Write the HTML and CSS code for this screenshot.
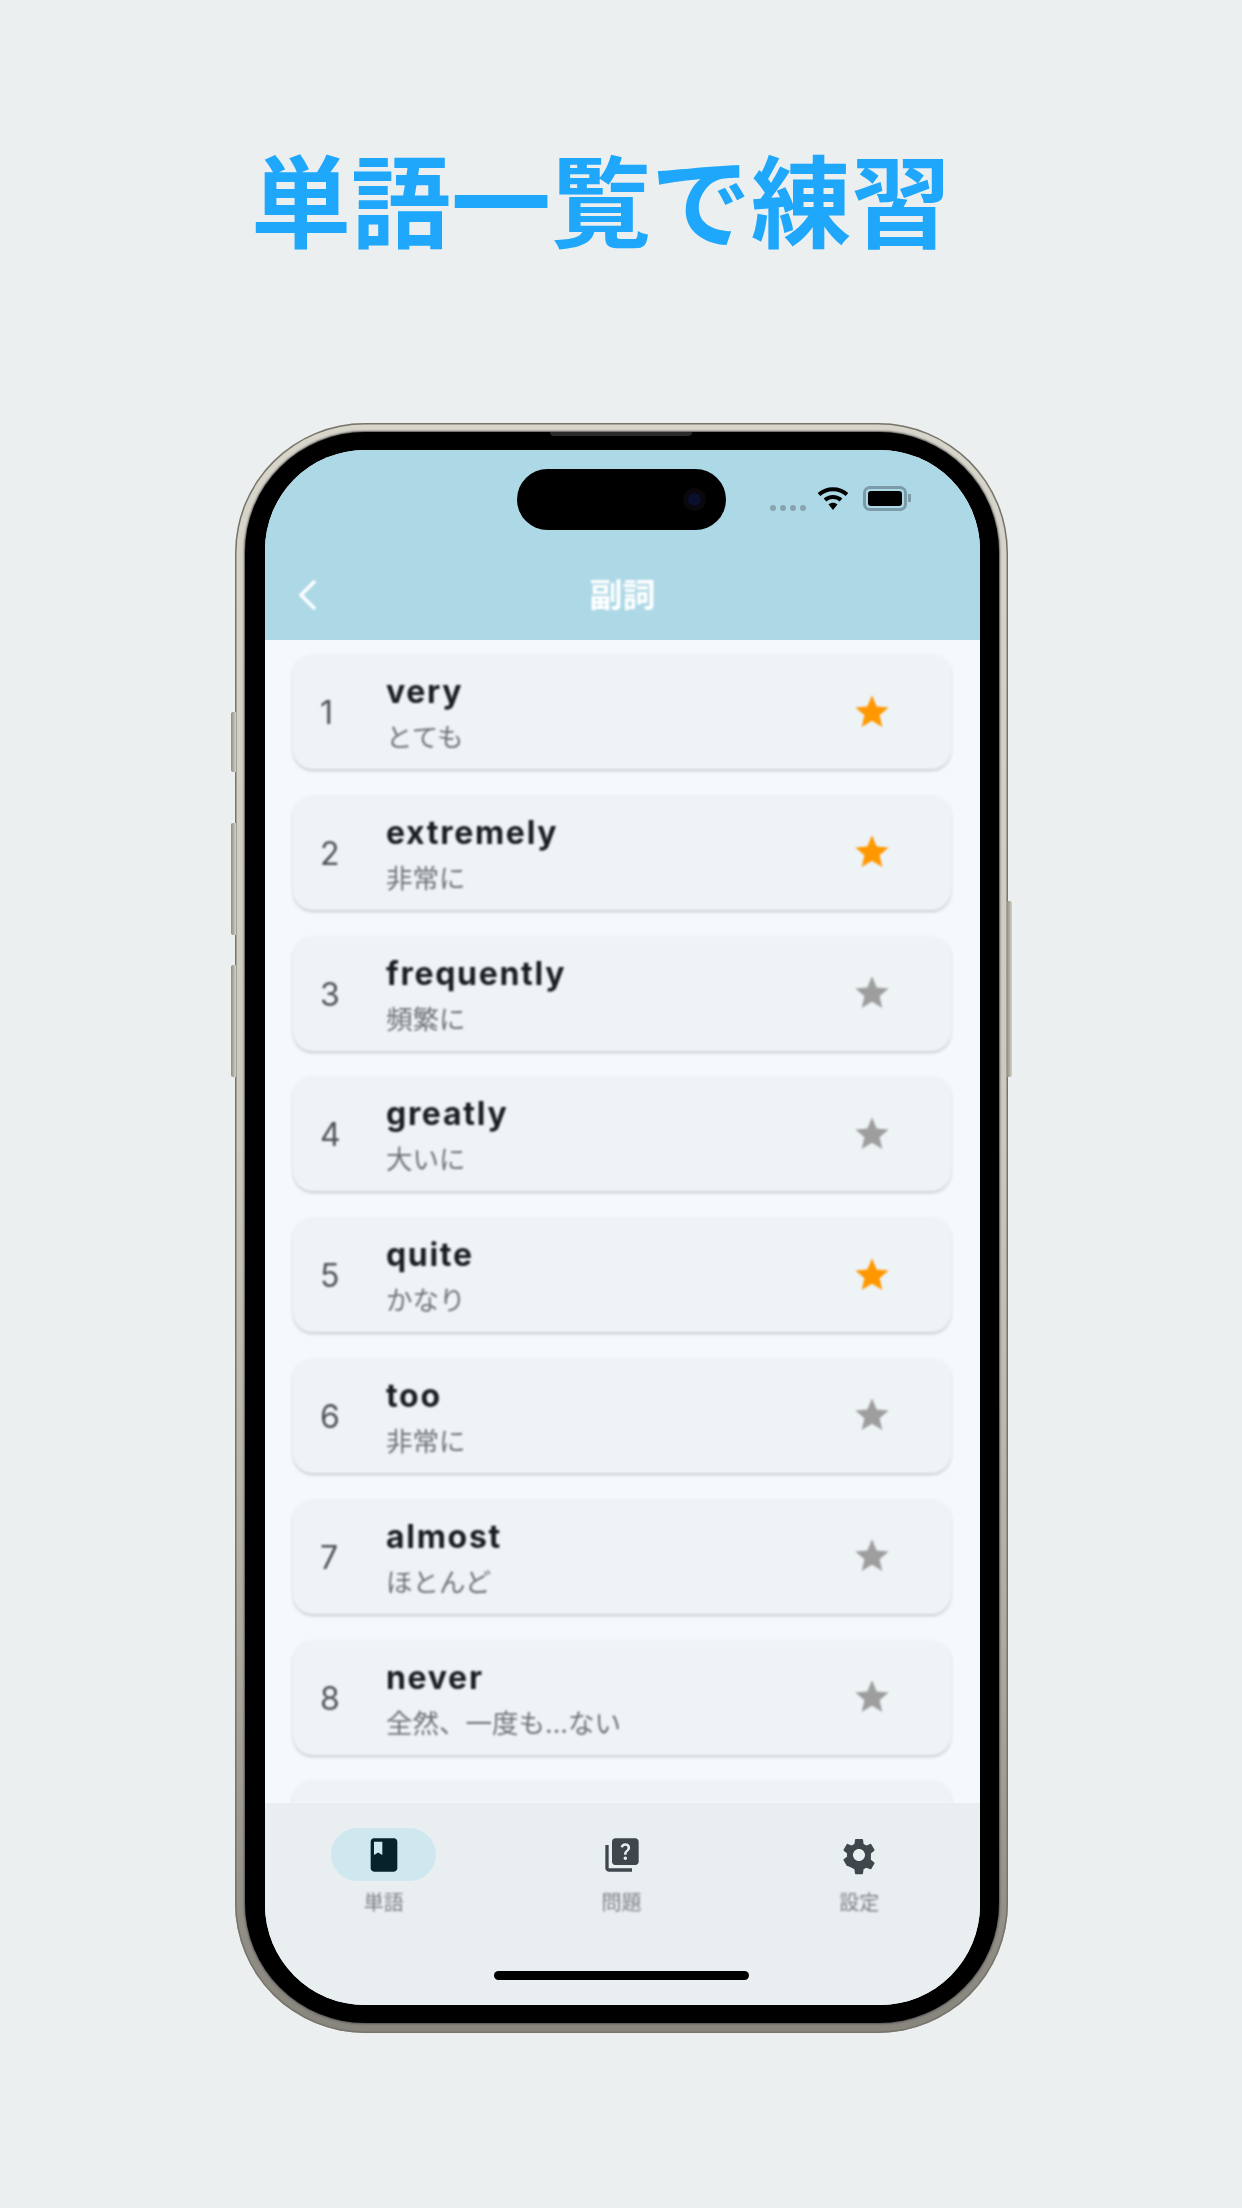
FILE: index.html
```html
<!DOCTYPE html>
<html lang="ja">
<head>
  <meta charset="UTF-8">
  <title>単語一覧で練習</title>
  <link rel="stylesheet" href="styles.css">
</head>
<body>
  <h1 class="headline">単語一覧で練習</h1>

  <div class="phone">
    <span class="side-btn btn-action"></span>
    <span class="side-btn btn-up"></span>
    <span class="side-btn btn-down"></span>
    <span class="side-btn btn-power"></span>
    <div class="bezel">
      <span class="speaker"></span>
      <div class="screen">
        <header class="app-header">
          <div class="status-row">
            <div class="island"><span class="camera"></span></div>
            <div class="status-icons">
              <div class="signal"><i></i><i></i><i></i><i></i></div>
              <svg class="wifi" viewBox="0 0 32 26">
                <path d="M2 9.5C10 2.5 22 2.5 30 9.5" />
                <path d="M8 15C12.5 11 19.500 11 24 15" />
                <path class="wifi-dot" d="M11.500 19.500L16 25L20.500 19.500C18 17.300 14 17.300 11.500 19.500Z" />
              </svg>
              <div class="battery"><span></span></div>
            </div>
          </div>
          <div class="title-row">
            <svg class="back" viewBox="0 0 20 32"><path d="M17 2L3 16L17 30" /></svg>
            <div class="page-title">副詞</div>
          </div>
        </header>

        <main class="word-list">
          <div class="card">
            <div class="num">1</div>
            <div class="word"><div class="en">very</div><div class="ja">とても</div></div>
            <svg class="star on" viewBox="0 0 24 24"><path d="M12 17.270L18.180 21l-1.640-7.030L22 9.240l-7.190-.610L12 2 9.190 8.630 2 9.240l5.460 4.730L5.820 21z" /></svg>
          </div>
          <div class="card">
            <div class="num">2</div>
            <div class="word"><div class="en">extremely</div><div class="ja">非常に</div></div>
            <svg class="star on" viewBox="0 0 24 24"><path d="M12 17.270L18.180 21l-1.640-7.030L22 9.240l-7.190-.610L12 2 9.190 8.630 2 9.240l5.460 4.730L5.820 21z" /></svg>
          </div>
          <div class="card">
            <div class="num">3</div>
            <div class="word"><div class="en">frequently</div><div class="ja">頻繁に</div></div>
            <svg class="star" viewBox="0 0 24 24"><path d="M12 17.270L18.180 21l-1.640-7.030L22 9.240l-7.190-.610L12 2 9.190 8.630 2 9.240l5.460 4.730L5.820 21z" /></svg>
          </div>
          <div class="card">
            <div class="num">4</div>
            <div class="word"><div class="en">greatly</div><div class="ja">大いに</div></div>
            <svg class="star" viewBox="0 0 24 24"><path d="M12 17.270L18.180 21l-1.640-7.030L22 9.240l-7.190-.610L12 2 9.190 8.630 2 9.240l5.460 4.730L5.820 21z" /></svg>
          </div>
          <div class="card">
            <div class="num">5</div>
            <div class="word"><div class="en">quite</div><div class="ja">かなり</div></div>
            <svg class="star on" viewBox="0 0 24 24"><path d="M12 17.270L18.180 21l-1.640-7.030L22 9.240l-7.190-.610L12 2 9.190 8.630 2 9.240l5.460 4.730L5.820 21z" /></svg>
          </div>
          <div class="card">
            <div class="num">6</div>
            <div class="word"><div class="en">too</div><div class="ja">非常に</div></div>
            <svg class="star" viewBox="0 0 24 24"><path d="M12 17.270L18.180 21l-1.640-7.030L22 9.240l-7.190-.610L12 2 9.190 8.630 2 9.240l5.460 4.730L5.820 21z" /></svg>
          </div>
          <div class="card">
            <div class="num">7</div>
            <div class="word"><div class="en">almost</div><div class="ja">ほとんど</div></div>
            <svg class="star" viewBox="0 0 24 24"><path d="M12 17.270L18.180 21l-1.640-7.030L22 9.240l-7.190-.610L12 2 9.190 8.630 2 9.240l5.460 4.730L5.820 21z" /></svg>
          </div>
          <div class="card">
            <div class="num">8</div>
            <div class="word"><div class="en">never</div><div class="ja">全然、一度も...ない</div></div>
            <svg class="star" viewBox="0 0 24 24"><path d="M12 17.270L18.180 21l-1.640-7.030L22 9.240l-7.190-.610L12 2 9.190 8.630 2 9.240l5.460 4.730L5.820 21z" /></svg>
          </div>
          <div class="card"></div>
        </main>

        <nav class="tabs">
          <div class="tab active">
            <div class="tab-icon">
              <svg viewBox="0 0 24 24"><path d="M18 2H6c-1.100 0-2 .9-2 2v16c0 1.100.9 2 2 2h12c1.100 0 2-.9 2-2V4c0-1.100-.9-2-2-2zM6 4h5v8l-2.500-1.500L6 12V4z" /></svg>
            </div>
            <div class="tab-label">単語</div>
          </div>
          <div class="tab">
            <div class="tab-icon">
              <svg viewBox="0 0 24 24"><path d="M4 6H2v14c0 1.100.9 2 2 2h14v-2H4V6zm16-4H8c-1.100 0-2 .9-2 2v12c0 1.100.9 2 2 2h12c1.100 0 2-.9 2-2V4c0-1.100-.9-2-2-2zm-5.990 13c-.59 0-1.050-.47-1.050-1.050 0-.59.47-1.040 1.050-1.040.59 0 1.040.45 1.040 1.040 0 .58-.45 1.050-1.040 1.050zm2.500-6.170c-.63.93-1.230 1.210-1.560 1.810-.13.24-.18.4-.18 1.180h-1.520c0-.41-.06-1.080.26-1.650.41-.73 1.180-1.160 1.630-1.800.48-.68.21-1.940-1.140-1.940-.88 0-1.320.67-1.500 1.230l-1.370-.57C11.510 5.960 12.520 5 13.990 5c1.230 0 2.080.56 2.510 1.260.37.61.58 1.730.01 2.570z" /></svg>
            </div>
            <div class="tab-label">問題</div>
          </div>
          <div class="tab">
            <div class="tab-icon">
              <svg viewBox="0 0 24 24"><path d="M19.140 12.940c.04-.3.06-.61.06-.94 0-.32-.02-.64-.07-.94l2.030-1.580c.18-.14.23-.41.12-.61l-1.920-3.320c-.12-.22-.37-.29-.59-.22l-2.390.96c-.5-.38-1.030-.7-1.620-.94l-.36-2.540c-.04-.24-.24-.41-.48-.41h-3.840c-.24 0-.43.17-.47.41l-.36 2.540c-.59.24-1.130.57-1.620.94l-2.390-.96c-.22-.08-.47 0-.59.22L2.740 8.870c-.12.21-.08.47.12.61l2.030 1.580c-.05.3-.09.63-.09.94s.02.64.07.94l-2.030 1.580c-.18.14-.23.41-.12.61l1.920 3.320c.12.22.37.29.59.22l2.390.96c.5.38 1.030.7 1.620.94l.36 2.540c.05.24.24.41.48.41h3.840c.24 0 .44-.17.47-.41l.36-2.540c.59-.24 1.130-.56 1.620-.94l2.390.96c.22.08.47 0 .59-.22l1.920-3.320c.12-.22.07-.47-.12-.61l-2.010-1.580zM12 15.600c-1.980 0-3.600-1.620-3.600-3.600s1.620-3.600 3.600-3.600 3.600 1.620 3.600 3.600-1.620 3.600-3.600 3.600z" /></svg>
            </div>
            <div class="tab-label">設定</div>
          </div>
          <span class="home-bar"></span>
        </nav>
      </div>
    </div>
  </div>
</body>
</html>
```

FILE: styles.css
```css
body {
  margin: 0;
  height: 2208px;
  overflow: hidden;
  background-color: #ebeff0;
  font-family: Inter, "Noto Sans CJK JP", sans-serif;
}

.headline {
  margin: 0;
  padding: 135px 40px 0 0;
  height: 423px;
  box-sizing: border-box;
  text-align: center;
  font-family: "Noto Sans CJK JP", sans-serif;
  font-size: 100px;
  line-height: 124px;
  font-weight: 700;
  color: #1ea7fb;
}

/* phone body */
.phone {
  position: relative;
  box-sizing: border-box;
  width: 773px;
  height: 1610px;
  margin-left: 235px;
  padding: 9px 9px 10px 10px;
  border-radius: 130px;
  background: linear-gradient(180deg, #d8d5cb 0%, #cbc8be 45%, #aeaba1 75%, #88857d 100%);
  box-shadow: inset 0 0 0 1.500px #77746c;
}

.bezel {
  position: relative;
  box-sizing: border-box;
  height: 100%;
  padding: 18px 19px 18px 20px;
  border-radius: 120px;
  background: #000;
  box-shadow: 0 0 2px 1px #555;
}

.speaker {
  position: absolute;
  top: 0;
  left: 305px;
  width: 142px;
  height: 4px;
  border-radius: 0 0 4px 4px;
  background: #2a2a2a;
}

.side-btn {
  position: absolute;
  width: 5px;
  background: linear-gradient(90deg, #8f8c83, #d4d1c7);
}
.btn-action { left: -4px; top: 289px; height: 60px; border-radius: 2px 0 0 2px; }
.btn-up { left: -4px; top: 400px; height: 112px; border-radius: 2px 0 0 2px; }
.btn-down { left: -4px; top: 542px; height: 112px; border-radius: 2px 0 0 2px; }
.btn-power { right: -4px; top: 478px; height: 176px; border-radius: 0 2px 2px 0; }

.screen {
  display: flex;
  flex-direction: column;
  height: 100%;
  overflow: hidden;
  border-radius: 100px;
  background-color: #f4f9fd;
}

/* top bar */
.app-header {
  flex: none;
  height: 190px;
  background-color: #add8e6;
}

.status-row {
  position: relative;
  height: 118px;
}

.island {
  position: absolute;
  top: 19px;
  left: 252px;
  width: 209px;
  height: 61px;
  border-radius: 31px;
  background: #000;
}

.camera {
  position: absolute;
  top: 24px;
  left: 171px;
  width: 13px;
  height: 13px;
  border-radius: 50%;
  background: #0b0f2e;
  box-shadow: 0 0 0 5px #0a070d;
}

.status-icons {
  position: absolute;
  top: 35px;
  left: 505px;
  display: flex;
  align-items: center;
  gap: 11px;
}

.signal {
  display: flex;
  gap: 4px;
  margin-top: 20px;
  filter: blur(0.6px);
}
.signal i {
  width: 6px;
  height: 6px;
  border-radius: 50%;
  background: #87a3ae;
}

.wifi {
  width: 32px;
  height: 26px;
}
.wifi path {
  fill: none;
  stroke: #000;
  stroke-width: 4;
}
.wifi .wifi-dot {
  fill: #000;
  stroke: none;
}

.battery {
  position: relative;
  box-sizing: border-box;
  width: 44px;
  height: 25px;
  margin-left: 3px;
  padding: 2px;
  border: 3px solid #7a9ba7;
  border-radius: 7px;
  filter: blur(0.5px);
}
.battery span {
  display: block;
  height: 100%;
  border-radius: 3px;
  background: #000;
}
.battery::after {
  content: "";
  position: absolute;
  top: 5px;
  right: -7px;
  width: 3px;
  height: 8px;
  background: #7a9ba7;
}

.title-row {
  position: relative;
  height: 72px;
  text-align: center;
  filter: blur(0.8px);
}

.back {
  position: absolute;
  top: 11px;
  left: 33px;
  width: 20px;
  height: 32px;
}
.back path {
  fill: none;
  stroke: #fff;
  stroke-width: 3.500;
}

.page-title {
  font-size: 33px;
  font-weight: 700;
  line-height: 54px;
  color: #fff;
}

/* word cards */
.word-list {
  flex: 1;
  min-height: 0;
  overflow: hidden;
  padding: 14px 29px 0 28px;
  display: flex;
  flex-direction: column;
  gap: 25.800px;
  filter: blur(0.8px);
}

.card {
  flex: none;
  display: flex;
  align-items: center;
  height: 115px;
  border-radius: 20px;
  background-color: #eef3f6;
  box-shadow: 0 2px 3px rgba(0, 0, 0, 0.18);
}

.num {
  width: 93px;
  padding: 2px 0 0 27px;
  box-sizing: border-box;
  font-size: 32px;
  color: #4c5257;
}

.word {
  flex: 1;
  padding-top: 4px;
}

.en {
  font-size: 32px;
  font-weight: 700;
  letter-spacing: 1.700px;
  line-height: 40px;
  color: #1a1e21;
}

.ja {
  margin-top: 7px;
  font-size: 26.500px;
  line-height: 36px;
  color: #6f7478;
}

.star {
  width: 40px;
  height: 40px;
  margin-right: 59px;
  fill: #9e9e9e;
}
.star.on {
  fill: #ff9800;
}

/* bottom tabs */
.tabs {
  position: relative;
  flex: none;
  display: flex;
  height: 202px;
  padding: 25px 2px 0 0;
  box-sizing: border-box;
  background-color: #e9eef1;
}

.tab {
  flex: 1;
  display: flex;
  flex-direction: column;
  align-items: center;
}

.tab-icon {
  width: 105px;
  height: 53px;
  border-radius: 27px;
  display: flex;
  align-items: center;
  justify-content: center;
}
.tab-icon svg {
  width: 40px;
  height: 40px;
  fill: #3f474c;
  filter: blur(0.6px);
}

.tab.active .tab-icon {
  background-color: #cfe8f0;
}
.tab.active .tab-icon svg {
  fill: #08222b;
}

.tab-label {
  margin-top: 7px;
  font-size: 20px;
  line-height: 30px;
  color: #7c8286;
  filter: blur(0.8px);
}

.home-bar {
  position: absolute;
  left: 229px;
  bottom: 25px;
  width: 255px;
  height: 9px;
  border-radius: 5px;
  background: #000;
}
```
